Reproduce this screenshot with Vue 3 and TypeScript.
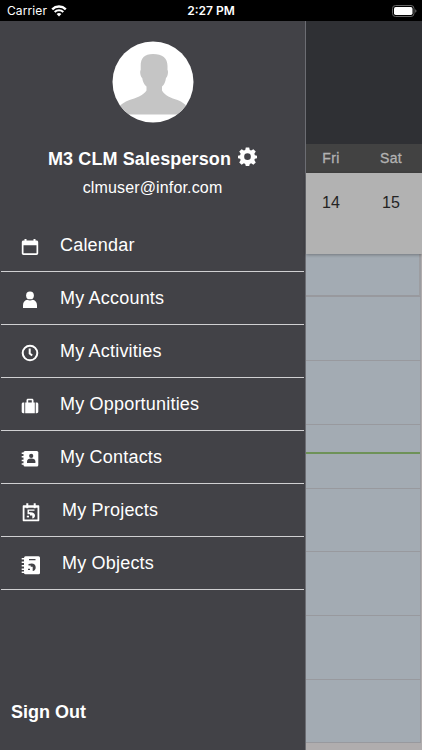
<script setup lang="ts">
type IconName = 'calendar' | 'account' | 'activity' | 'opportunity' | 'contact' | 'project' | 'object'

interface MenuItem {
  icon: IconName
  label: string
  wide?: boolean
}

const items: MenuItem[] = [
  { icon: 'calendar', label: 'Calendar' },
  { icon: 'account', label: 'My Accounts' },
  { icon: 'activity', label: 'My Activities' },
  { icon: 'opportunity', label: 'My Opportunities' },
  { icon: 'contact', label: 'My Contacts' },
  { icon: 'project', label: 'My Projects', wide: true },
  { icon: 'object', label: 'My Objects', wide: true },
]

const days = [
  { name: 'Fri', date: 14 },
  { name: 'Sat', date: 15 },
]

const slotHeights: number[] = [43, 64, 64, 64, 63, 64, 64, 63]
</script>

<template>
  <div class="screen">
    <header class="status">
      <div class="carrier">
        <span>Carrier</span>
        <svg width="16" height="12" viewBox="0 0 16 12" fill="none" stroke="#fff">
          <path d="M1.2 4.3a9.8 9.8 0 0 1 13.6 0" stroke-width="2.4" />
          <path d="M3.7 7a6.2 6.2 0 0 1 8.6 0" stroke-width="2.100" />
          <path d="M8 11.6 5.6 9.1a3.4 3.4 0 0 1 4.8 0z" fill="#fff" stroke="none" />
        </svg>
      </div>
      <span class="time">2:27 PM</span>
      <div class="battery">
        <svg width="25" height="12" viewBox="0 0 25 12">
          <rect x=".5" y=".5" width="21.5" height="11" rx="3" fill="none" stroke="#666" />
          <rect x="2" y="2" width="18.5" height="8" rx="1.7" fill="#fff" />
          <path d="M23.3 4.2v3.6c1.5-.6 1.5-3 0-3.6z" fill="#777" />
        </svg>
      </div>
    </header>

    <div class="body">
      <aside class="drawer">
        <section class="profile">
          <svg class="avatar" width="82" height="82" viewBox="0 0 82 82">
            <defs>
              <clipPath id="avatar-clip"><circle cx="41" cy="41" r="40.5" /></clipPath>
            </defs>
            <circle cx="41" cy="41" r="40.5" fill="#fff" />
            <path
              clip-path="url(#avatar-clip)"
              fill="#c5c5c5"
              d="M41 13c-8.500 0-12.500 4-12.300 12v4c-1 1-.5 6.500 1.500 8 .6 4 2 6.500 4.300 8.500v4c-3 5-11 7.500-17 9.500-5 2-9 4.500-12 8v6.500h71V67c-3-3.500-6-6-11-8-6-2-13-4.500-15.500-9.500v-4c2.300-2 3.400-4.500 4-8.500 2-1.500 2.500-7 1.500-8v-4c0-8-5-12-14.500-12z"
            />
          </svg>
          <div class="name-row">
            <span class="name">M3 CLM Salesperson</span>
            <svg class="gear" width="19" height="19" viewBox="-10 -10 20 20" fill="#fff">
              <path
                fill-rule="evenodd"
                d="M-1.800-9.500h3.600l.6 2.700 1.400.6 2.400-1.500 2.500 2.500-1.500 2.400.6 1.400 2.200.6v2.600l-2.200.6-.6 1.400 1.500 2.400-2.500 2.500-2.400-1.500-1.400.6-.6 2.200h-3.600l-.6-2.200-1.400-.6-2.400 1.500-2.500-2.500 1.500-2.400-.6-1.400-2.200-.6v-2.600l2.200-.6.6-1.400-1.500-2.400 2.500-2.500 2.400 1.500 1.400-.6zM0-3.300a3.500 3.500 0 1 0 0 7 3.500 3.500 0 0 0 0-7z"
              />
            </svg>
          </div>
          <div class="email">clmuser@infor.com</div>
        </section>

        <nav class="menu">
          <a v-for="item in items" :key="item.label" class="item" :class="{ wide: item.wide }">
            <svg class="icon" width="20" height="20" viewBox="0 0 20 20" fill="#fff">
              <path
                v-if="item.icon === 'calendar'"
                fill-rule="evenodd"
                d="M4.500 2h2v1.500h7V2h2v1.500h1c1 0 1.700.7 1.700 1.700v11c0 1-.7 1.700-1.700 1.700h-13c-1 0-1.700-.7-1.700-1.700v-11c0-1 .7-1.700 1.700-1.700h1zM3.500 8.300v7.900h13V8.300z"
              />
              <template v-else-if="item.icon === 'account'">
                <circle cx="10" cy="5.400" r="3.900" />
                <path d="M3 18v-2.700C3 12 5 10.100 7.300 9.800c1.700 1 3.700 1 5.400 0 2.300.3 4.300 2.200 4.300 5.500V18z" />
              </template>
              <g v-else-if="item.icon === 'activity'" fill="none" stroke="#fff" stroke-width="2">
                <circle cx="10" cy="10" r="7.300" />
                <path d="M9.700 5.500v5l2.500 2" />
              </g>
              <template v-else-if="item.icon === 'opportunity'">
                <path d="M4.300 6.500v10.700h-1c-1 0-1.600-.7-1.600-1.600V8.100c0-1 .6-1.600 1.600-1.600zM15.700 6.500v10.700h1c1 0 1.600-.7 1.600-1.600V8.100c0-1-.6-1.600-1.600-1.600z" />
                <path fill-rule="evenodd" d="M5.200 6.500h1.300V4.300c0-1 .6-1.600 1.600-1.600h3.800c1 0 1.600.6 1.600 1.600v2.200h1.300v10.700H5.200zM8.200 4.200v2.300h3.600V4.200z" />
              </template>
              <template v-else-if="item.icon === 'contact'">
                <rect x="3.500" y="2" width="14.800" height="15.500" rx="1.500" />
                <path d="M1.700 3.500h3v1.500h-3zM1.700 7h3v1.500h-3zM1.700 10.700h3v1.500h-3zM1.700 14.300h3v1.500h-3z" />
                <g fill="#424247">
                  <circle cx="11.200" cy="6.900" r="2.100" />
                  <path d="M7 14v-1.500C7 10.500 8.500 9.500 11.200 9.500s4.200 1 4.200 3V14z" />
                </g>
              </template>
              <template v-else-if="item.icon === 'project'">
                <path fill-rule="evenodd" d="M3.700 3.300h14.600c.6 0 1 .4 1 1v14c0 .6-.4 1-1 1H3.700c-.6 0-1-.4-1-1v-14c0-.6.4-1 1-1zM4.500 5.800v11.700h13V5.800z" />
                <path d="M6.300 1.300h2v5h-2zM13.700 1.300h2v5h-2zM7.500 7.500h7v1.300H9v1.500c3.700-.6 6 .8 6 3.300 0 1.700-1 2.700-2.700 3v-3.100H10v-1.300H7.500z" />
                <path d="M6.800 13.700H9v1.700H6.800z" />
              </template>
              <template v-else>
                <rect x="4" y="1.300" width="16" height="18" rx="1.500" />
                <path d="M1.700 3h4v1.500h-4zM1.700 6.500h4V8h-4zM1.700 10h4v1.500h-4zM1.700 13.500h4V15h-4zM1.700 16.500h4V18h-4z" />
                <g fill="#424247">
                  <path d="M9 4h6.500v1.300H9zM8.500 9c4.500-1.500 7.200.2 7.200 3.300 0 2.200-1 3.500-3 3.800v-4.400h-2v-1.300H8.500z" />
                  <path d="M8 13.700h2v1.300H8z" />
                </g>
              </template>
            </svg>
            <span class="label">{{ item.label }}</span>
          </a>
        </nav>

        <div class="signout">Sign Out</div>
      </aside>

      <main class="agenda">
        <div class="toolbar"></div>
        <div class="weekdays">
          <span v-for="day in days" :key="day.name">{{ day.name }}</span>
        </div>
        <div class="dates">
          <span v-for="day in days" :key="day.date">{{ day.date }}</span>
        </div>
        <div class="slots">
          <div v-for="(h, i) in slotHeights" :key="i" class="slot" :style="{ height: h + 'px' }">
            <div v-if="i === 3" class="now"></div>
          </div>
        </div>
      </main>
    </div>
  </div>
</template>

<style>
body {
  background: #424247;
}
</style>

<style scoped>
.screen {
  width: 422px;
  height: 750px;
  overflow: hidden;
  display: flex;
  flex-direction: column;
  font-family: 'Liberation Sans', Arial, sans-serif;
  color: #fff;
}
.status {
  height: 21px;
  flex: none;
  background: #000;
  display: grid;
  grid-template-columns: 1fr auto 1fr;
  align-items: center;
  font-family: Inter, sans-serif;
  font-size: 12px;
  line-height: 21px;
}
.carrier {
  display: flex;
  align-items: center;
  gap: 4px;
  padding-left: 7px;
  letter-spacing: 0.1px;
}
.time {
  font-weight: 600;
}
.battery {
  display: flex;
  justify-content: flex-end;
  padding-right: 5px;
}
.body {
  flex: 1;
  display: grid;
  grid-template-columns: 306px 1fr;
  min-height: 0;
}
.drawer {
  background: #424247;
  border-right: 1px solid #6c6d73;
  box-sizing: border-box;
  display: flex;
  flex-direction: column;
}
.profile {
  height: 198px;
  flex: none;
  display: flex;
  flex-direction: column;
  align-items: center;
}
.avatar {
  margin-top: 20px;
  margin-left: 1px;
  flex: none;
}
.name-row {
  display: flex;
  align-items: center;
  gap: 7px;
  margin-top: 22px;
  height: 26px;
}
.name {
  font-size: 18px;
  font-weight: bold;
  line-height: 26px;
  padding-top: 2px;
  letter-spacing: 0.12px;
}
.gear {
  margin-bottom: 4px;
}
.email {
  font-size: 16px;
  line-height: 20px;
  margin-top: 7px;
  letter-spacing: 0.15px;
}
.menu {
  display: flex;
  flex-direction: column;
}
.item {
  height: 53px;
  box-sizing: border-box;
  border-bottom: 1px solid #d0d0d2;
  margin: 0 1px;
  padding-left: 19px;
  display: flex;
  align-items: center;
  gap: 20px;
}
.icon {
  margin-top: 4px;
}
.label {
  font-size: 18px;
  line-height: 24px;
  letter-spacing: 0.2px;
}
.wide {
  gap: 22px;
}
.signout {
  margin-top: auto;
  padding: 0 0 26px 11px;
  font-size: 18px;
  font-weight: bold;
  line-height: 24px;
}
.agenda {
  background: #b0adae;
  display: flex;
  flex-direction: column;
  min-width: 0;
}
.toolbar {
  height: 123px;
  background: #2f3034;
}
.weekdays,
.dates {
  display: grid;
  grid-template-columns: 50px 70px;
  text-align: center;
}
.weekdays {
  height: 29px;
  line-height: 29px;
  background: #424242;
  color: #b2b2b2;
  font-size: 14px;
  letter-spacing: 0.4px;
  -webkit-text-stroke: 0.3px #b2b2b2;
}
.dates {
  height: 81px;
  line-height: 59px;
  background: #b2b2b2;
  color: #242424;
  font-size: 16px;
  letter-spacing: 0.2px;
  position: relative;
  box-shadow: 0 1px 3px rgba(0, 0, 0, 0.3);
}
.slots {
  margin-right: 1px;
}
.slot {
  box-sizing: border-box;
  background: #a3abb3;
  border-bottom: 1px solid #98999e;
  border-right: 1px solid #9c9da1;
}
.slot:first-child {
  border-bottom-width: 2px;
  border-right-width: 2px;
}
.now {
  height: 2px;
  background: #6e9258;
  position: relative;
  top: 27px;
}
</style>
